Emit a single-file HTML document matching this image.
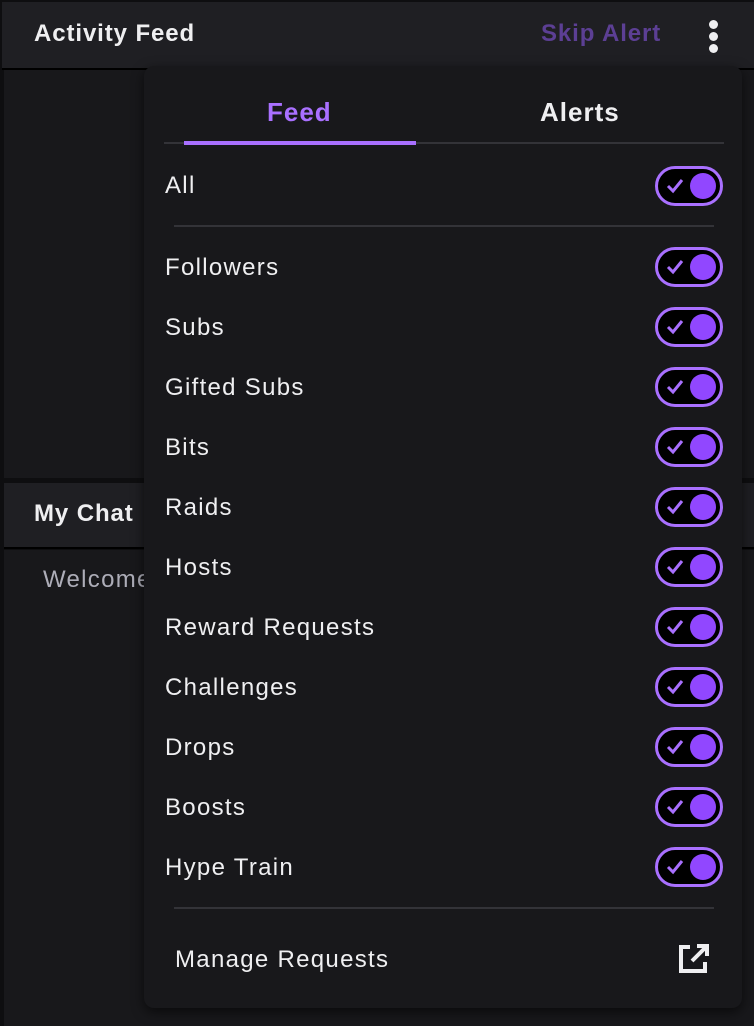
<!DOCTYPE html><html><head><style>
body{margin:0;width:754px;height:1026px;background:#0e0e10;font-family:"Liberation Sans",sans-serif;position:relative;overflow:hidden;color:#efeff1}
.a{position:absolute}
.tg{position:absolute;left:655px;width:62px;height:34px;border:3px solid #a970ff;border-radius:20px;background:#000}
.tg:after{content:"";position:absolute;right:4px;top:4px;width:26px;height:26px;border-radius:50%;background:#9147ff}
.tg svg{position:absolute;left:8px;top:9px}
.lb{position:absolute;left:165px;font-size:24px;line-height:30px;letter-spacing:1.3px}
</style></head><body>
<div class="a" style="left:2px;top:2px;width:752px;height:66px;background:#1f1f23;border-bottom:2px solid #000"></div>
<div class="a" style="left:34px;top:20px;font-size:24px;font-weight:bold;letter-spacing:0.9px">Activity Feed</div>
<div class="a" style="left:541px;top:20px;font-size:24px;font-weight:bold;color:#5c3f94;letter-spacing:0.9px">Skip Alert</div>
<div class="a" style="left:709px;top:20px;width:9px;height:9px;border-radius:50%;background:#efeff1;box-shadow:0 12px 0 #efeff1,0 24px 0 #efeff1"></div>
<div class="a" style="left:4px;top:70px;width:750px;height:408px;background:#18181b"></div>
<div class="a" style="left:4px;top:483px;width:750px;height:64px;background:#1f1f23;border-bottom:2px solid #000"></div>
<div class="a" style="left:34px;top:500px;font-size:24px;font-weight:bold;letter-spacing:0.9px">My Chat</div>
<div class="a" style="left:4px;top:550px;width:750px;height:476px;background:#18181b"></div>
<div class="a" style="left:43px;top:566px;font-size:24px;color:#adadb8;letter-spacing:1.3px">Welcome</div>
<div class="a" style="left:144px;top:66px;width:598px;height:942px;background:#18181b;border-radius:10px;box-shadow:0 4px 12px rgba(0,0,0,.6)"></div>
<div class="a" style="left:164px;top:142px;width:560px;height:2px;background:#333338"></div>
<div class="a" style="left:184px;top:141px;width:232px;height:4px;background:#a970ff"></div>
<div class="a" style="left:267px;top:97px;font-size:26px;font-weight:bold;color:#a970ff;letter-spacing:1px">Feed</div>
<div class="a" style="left:540px;top:97px;font-size:26px;font-weight:bold;letter-spacing:1px">Alerts</div>
<div class="a" style="left:174px;top:225px;width:540px;height:2px;background:#333338"></div>
<div class="a" style="left:174px;top:907px;width:540px;height:2px;background:#333338"></div>
<div class="lb" style="top:171px">All</div><div class="tg" style="top:166px"><svg width="18" height="16"><path d="M2 8l5 5 9-11" stroke="#a970ff" stroke-width="3" fill="none"/></svg></div>
<div class="lb" style="top:253px">Followers</div><div class="tg" style="top:247px"><svg width="18" height="16"><path d="M2 8l5 5 9-11" stroke="#a970ff" stroke-width="3" fill="none"/></svg></div>
<div class="lb" style="top:313px">Subs</div><div class="tg" style="top:307px"><svg width="18" height="16"><path d="M2 8l5 5 9-11" stroke="#a970ff" stroke-width="3" fill="none"/></svg></div>
<div class="lb" style="top:373px">Gifted Subs</div><div class="tg" style="top:367px"><svg width="18" height="16"><path d="M2 8l5 5 9-11" stroke="#a970ff" stroke-width="3" fill="none"/></svg></div>
<div class="lb" style="top:433px">Bits</div><div class="tg" style="top:427px"><svg width="18" height="16"><path d="M2 8l5 5 9-11" stroke="#a970ff" stroke-width="3" fill="none"/></svg></div>
<div class="lb" style="top:493px">Raids</div><div class="tg" style="top:487px"><svg width="18" height="16"><path d="M2 8l5 5 9-11" stroke="#a970ff" stroke-width="3" fill="none"/></svg></div>
<div class="lb" style="top:553px">Hosts</div><div class="tg" style="top:547px"><svg width="18" height="16"><path d="M2 8l5 5 9-11" stroke="#a970ff" stroke-width="3" fill="none"/></svg></div>
<div class="lb" style="top:613px">Reward Requests</div><div class="tg" style="top:607px"><svg width="18" height="16"><path d="M2 8l5 5 9-11" stroke="#a970ff" stroke-width="3" fill="none"/></svg></div>
<div class="lb" style="top:673px">Challenges</div><div class="tg" style="top:667px"><svg width="18" height="16"><path d="M2 8l5 5 9-11" stroke="#a970ff" stroke-width="3" fill="none"/></svg></div>
<div class="lb" style="top:733px">Drops</div><div class="tg" style="top:727px"><svg width="18" height="16"><path d="M2 8l5 5 9-11" stroke="#a970ff" stroke-width="3" fill="none"/></svg></div>
<div class="lb" style="top:793px">Boosts</div><div class="tg" style="top:787px"><svg width="18" height="16"><path d="M2 8l5 5 9-11" stroke="#a970ff" stroke-width="3" fill="none"/></svg></div>
<div class="lb" style="top:853px">Hype Train</div><div class="tg" style="top:847px"><svg width="18" height="16"><path d="M2 8l5 5 9-11" stroke="#a970ff" stroke-width="3" fill="none"/></svg></div>
<div class="lb" style="left:175px;top:945px">Manage Requests</div>
<svg class="a" style="left:677px;top:942px" width="34" height="34"><path d="M13 5H4v24h24v-9" stroke="#efeff1" stroke-width="4" fill="none"/><path d="M15 19L29 5M20 4h10v10" stroke="#efeff1" stroke-width="4" fill="none"/></svg>
</body></html>
